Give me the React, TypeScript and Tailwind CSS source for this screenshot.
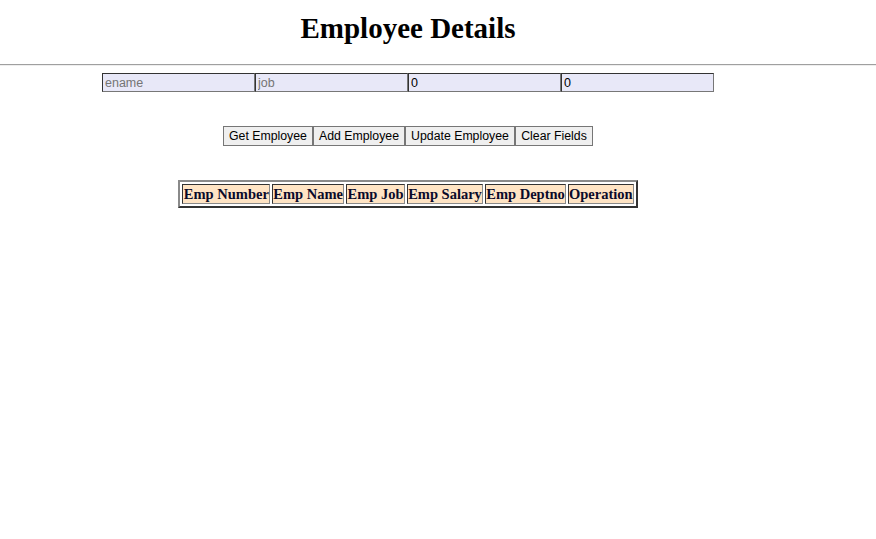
const headers: [string, number][] = [
  ['Emp Number', 88],
  ['Emp Name', 71],
  ['Emp Job', 59],
  ['Emp Salary', 76],
  ['Emp Deptno', 81],
  ['Operation', 65],
];
const buttons: [string, number][] = [
  ['Get Employee', 90],
  ['Add Employee', 92],
  ['Update Employee', 110],
  ['Clear Fields', 78],
];

export default function App() {
  return (
    <div className="min-h-screen w-full bg-white text-black">
      {/* Title */}
      <div className="w-[816px] pt-[10px] text-center">
        <h1 className="text-[29px] font-bold leading-[36px] [font-family:'Liberation_Serif','Times_New_Roman',serif]">
          Employee Details
        </h1>
      </div>
      <div className="mt-[18px] h-[2px] w-full border-t border-[#9f9f9f] bg-[#eeeeee]" />

      {/* Form inputs */}
      <div className="mt-[7px] flex w-[816px] justify-center text-[12.5px] [font-family:'Liberation_Sans',Arial,sans-serif]">
        <input
          placeholder="ename"
          className="h-[19px] w-[153px] border border-t-[#333] border-l-[#333] border-b-[#777] border-r-[#777] bg-[#e8e8f8] px-[2px] outline-none placeholder:text-[#757575]"
        />
        <input
          placeholder="job"
          className="h-[19px] w-[153px] border border-t-[#333] border-l-[#333] border-b-[#777] border-r-[#777] bg-[#e8e8f8] px-[2px] outline-none placeholder:text-[#757575]"
        />
        <input
          defaultValue="0"
          className="h-[19px] w-[153px] border border-t-[#333] border-l-[#333] border-b-[#777] border-r-[#777] bg-[#e8e8f8] px-[2px] outline-none"
        />
        <input
          defaultValue="0"
          className="h-[19px] w-[153px] border border-t-[#333] border-l-[#333] border-b-[#777] border-r-[#777] bg-[#e8e8f8] px-[2px] outline-none"
        />
      </div>

      {/* Buttons */}
      <div className="mt-[34px] flex w-[816px] justify-center text-[12.3px] [font-family:'Liberation_Sans',Arial,sans-serif]">
        {buttons.map(([b, w]) => (
          <button
            key={b}
            style={{ width: w }}
            className="h-[20px] border border-[#767676] bg-[#efefef] px-0 leading-[16px] text-black"
          >
            {b}
          </button>
        ))}
      </div>

      {/* Table */}
      <div className="mt-[34px] flex w-[816px] justify-center">
        <table className="border-separate border-spacing-[2px] border-2 border-t-[#8a8a8a] border-l-[#8a8a8a] border-b-[#333] border-r-[#333] [font-family:'Liberation_Serif','Times_New_Roman',serif]">
          <thead>
            <tr>
              {headers.map(([h, w]) => (
                <th
                  key={h}
                  style={{ width: w }}
                  className="border border-t-[#333] border-l-[#333] border-b-[#8a8a8a] border-r-[#8a8a8a] bg-[#ffe4c4] p-0 text-center text-[14.5px] font-bold leading-[18px] text-[#0a0a2a] whitespace-nowrap"
                >
                  {h}
                </th>
              ))}
            </tr>
          </thead>
          <tbody />
        </table>
      </div>
    </div>
  );
}
